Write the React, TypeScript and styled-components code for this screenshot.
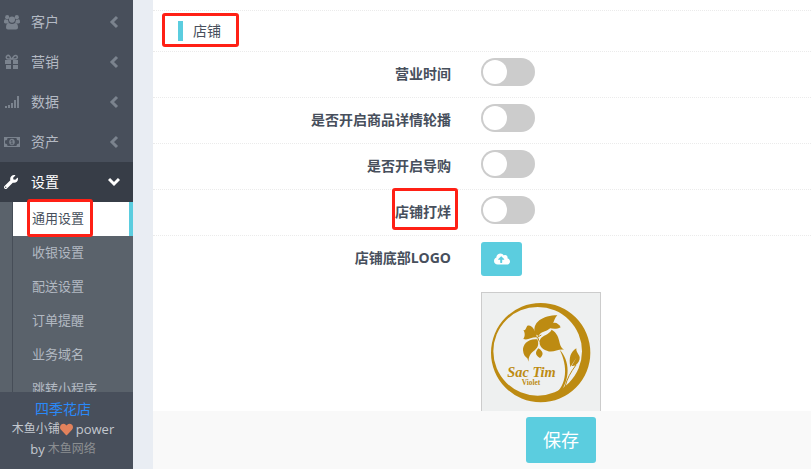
import React, { useState } from 'react';
import styled, { createGlobalStyle } from 'styled-components';
import { FaWrench, FaHeart, FaCloudUploadAlt } from 'react-icons/fa';

const teal = '#5bcddf';

const GlobalStyle = createGlobalStyle`
  * { box-sizing: border-box; }
  body {
    margin: 0;
    background: #e9edf3;
    font-family: "Open Sans", "Noto Sans CJK SC", sans-serif;
    font-size: 14px;
    color: #474f5c;
  }
  button, input { font-family: inherit; }
  ul { margin: 0; padding: 0; list-style: none; }
`;

const Page = styled.div`
  display: flex;
  gap: 20px;
  height: 100vh;
  overflow: hidden;
`;

const Sidebar = styled.aside`
  display: flex;
  flex-direction: column;
  flex: 0 0 133px;
  background: #484f5b;
`;

const Menu = styled.nav`
  flex: 1;
  min-height: 0;
  padding-top: 2px;
  overflow: hidden;
`;

const MenuButton = styled.button<{ $open?: boolean }>`
  display: grid;
  grid-template-columns: 16px 1fr 12px;
  column-gap: 11px;
  align-items: center;
  width: 100%;
  height: 40px;
  padding: 0 13px 0 4px;
  border: 0;
  background: ${(p) => (p.$open ? '#373d47' : 'transparent')};
  color: ${(p) => (p.$open ? '#fff' : '#b4bac4')};
  font-size: 14px;
  line-height: 20px;
  text-align: left;
  cursor: pointer;

  svg {
    display: block;
    color: ${(p) => (p.$open ? '#fff' : '#7b838e')};
  }
`;

const SubMenu = styled.ul`
  padding-left: 12px;
  background: #5a626b;
`;

const SubItem = styled.li`
  border-left: 1px solid #464d57;
`;

const SubLink = styled.a<{ $active?: boolean }>`
  display: block;
  height: 34px;
  padding-left: 19px;
  border-right: 4px solid ${(p) => (p.$active ? teal : 'transparent')};
  background: ${(p) => (p.$active ? '#fff' : 'transparent')};
  color: ${(p) => (p.$active ? '#474f5c' : '#b2b9c2')};
  font-size: 13px;
  line-height: 32px;
  text-decoration: none;
  white-space: nowrap;
`;

const Marked = styled.span`
  position: relative;
  display: inline-block;
`;

const Marker = styled.span<{ $top: number; $bottom: number; $left: number; $right: number }>`
  position: absolute;
  top: ${(p) => -p.$top}px;
  bottom: ${(p) => -p.$bottom}px;
  left: ${(p) => -p.$left}px;
  right: ${(p) => -p.$right}px;
  z-index: 1;
  border: 3px solid #ff2015;
  border-radius: 3px;
  pointer-events: none;
`;

const SideFooter = styled.footer`
  padding: 7px 7px 10px 0;
  color: #c3c8cf;
  font-size: 12px;
  line-height: 20px;
  text-align: center;
`;

const FooterLine = styled.div`
  display: flex;
  align-items: center;
  justify-content: center;
  gap: 3px;
  height: 20px;
  white-space: nowrap;
`;

const ShopLink = styled.a`
  color: #2a89f8;
  font-size: 14px;
  text-decoration: none;
`;

const Heart = styled(FaHeart)`
  margin-left: -3px;
  color: #e2825c;
`;

const VendorLink = styled.a`
  color: #8b8e91;
  text-decoration: none;
`;

const Latin = styled.span`
  font-size: 13px;
`;

const Panel = styled.main`
  display: flex;
  flex: 1;
  flex-direction: column;
  min-width: 0;
  background: #fff;
`;

const Form = styled.form`
  flex: 1;
  min-height: 0;
  padding-top: 10px;
  overflow: hidden;
`;

const SectionTitle = styled.h2`
  display: flex;
  align-items: center;
  height: 42px;
  margin: 0;
  padding-left: 25px;
  border-top: 1px dotted #ebebeb;
  border-bottom: 1px dotted #ebebeb;
  font-size: 14px;
  font-weight: 400;
  line-height: 20px;
`;

const TitleText = styled.span`
  display: block;
  padding-left: 10px;
  border-left: 5px solid ${teal};
`;

const Row = styled.div<{ $last?: boolean }>`
  display: grid;
  grid-template-columns: calc(50% - 31px) 1fr;
  column-gap: 30px;
  align-items: start;
  padding: 6px 0 ${(p) => (p.$last ? 0 : 11)}px;
  border-bottom: ${(p) => (p.$last ? '0' : '1px dotted #ebebeb')};
`;

const Label = styled.label`
  padding-top: 6px;
  font-weight: 700;
  line-height: 20px;
  text-align: right;
`;

const Switch = styled.input`
  appearance: none;
  display: block;
  width: 54px;
  height: 28px;
  margin: 0;
  padding: 2px;
  border-radius: 14px;
  background: #ccc;
  cursor: pointer;

  &::before {
    content: '';
    display: block;
    width: 24px;
    height: 24px;
    border-radius: 50%;
    background: #fff;
  }
  &:checked { background: ${teal}; }
  &:checked::before { margin-left: 26px; }
`;

const UploadButton = styled.button`
  display: flex;
  align-items: center;
  justify-content: center;
  width: 41px;
  height: 34px;
  border: 0;
  border-radius: 3px;
  background: ${teal};
  color: #fff;
  cursor: pointer;
`;

const Preview = styled.div`
  width: 120px;
  height: 120px;
  margin-top: 16px;
  border: 1px solid #ccc;
  background: #eef0f0;

  svg { display: block; }
`;

const ActionBar = styled.div`
  padding: 6px 0 6px calc(50% + 44px);
  background: #f9f9f9;
`;

const SaveButton = styled.button`
  display: block;
  width: 70px;
  height: 46px;
  padding: 0;
  border: 0;
  border-radius: 3px;
  background: ${teal};
  color: #fff;
  font-size: 18px;
  line-height: 46px;
  cursor: pointer;
`;

const UsersIcon = () => (
  <svg width="16" height="16" viewBox="0 0 16 16" fill="currentColor" aria-hidden="true">
    <circle cx="3.2" cy="3.2" r="2.1" />
    <circle cx="12.8" cy="3.2" r="2.1" />
    <circle cx="8" cy="5.600" r="3.100" />
    <path d="M1.300 5.300C.4 5.300 0 6.500 0 8c0 1 .5 1.400 1.400 1.400h2.200c.5-.5 1-.8 1.600-.9A4 4 0 0 1 4 5.500C3 6 2 5.700 1.300 5.300zM14.700 5.300c.9 0 1.300 1.200 1.300 2.700 0 1-.5 1.400-1.400 1.400h-2.200c-.5-.5-1-.8-1.600-.9A4 4 0 0 0 12 5.500c1 .5 2 .2 2.700-.2z" />
    <path d="M5 9c2 1.300 4 1.300 6 0 2.200 0 3 2 3 4.500 0 1.300-.8 2-2 2H4c-1.200 0-2-.7-2-2C2 11 2.800 9 5 9z" />
  </svg>
);

const GiftIcon = () => (
  <svg width="16" height="16" viewBox="0 0 16 16" fill="currentColor" aria-hidden="true">
    <path d="M1 6h6v4H1zM9 6h5v4H9zM2 11h5v4H2zM9 11h5v4H9z" />
    <path
      d="M7 5C6 2 5 1 3.500 1.500C1.500 2.500 2 5 4 5H11C14 5 14 2 12 1.500C10 1 9 3 8 5"
      fill="none"
      stroke="currentColor"
      strokeWidth="1.500"
    />
  </svg>
);

const SignalIcon = () => (
  <svg width="16" height="16" viewBox="0 0 16 16" fill="currentColor" aria-hidden="true">
    <path d="M1 12h2v2H1zM4 11h2v3H4zM7 9h2v5H7zM10 6h2v8h-2zM13 2h2v12h-2z" />
  </svg>
);

const MoneyIcon = () => (
  <svg width="16" height="16" viewBox="0 0 16 16" fill="currentColor" aria-hidden="true">
    <path
      fillRule="evenodd"
      d="M0 3h16v10H0zM3.500 4A2.500 2.500 0 0 1 1 6.500v3A2.500 2.500 0 0 1 3.500 12h9A2.500 2.500 0 0 1 15 9.500v-3A2.500 2.500 0 0 1 12.500 4z"
    />
    <path
      fillRule="evenodd"
      d="M8 4.700c1.800 0 2.800 1.400 2.800 3.300S9.800 11.300 8 11.300 5.200 9.900 5.200 8 6.200 4.700 8 4.700zM7.600 6L6.500 7v.8l1-.5v2.100h-.8v.8h2.500v-.8h-.8V6z"
    />
  </svg>
);

const Chevron = ({ down }: { down?: boolean }) => (
  <svg width="12" height="14" viewBox="0 0 12 14" fill="none" stroke="currentColor" strokeWidth="3" aria-hidden="true">
    <path d={down ? 'M1 4l5 5 5-5' : 'M9 2L4 7l5 5'} />
  </svg>
);

const FlowerLogo = () => (
  <svg width="118" height="118" viewBox="21 24 354 354" fill="#bd8b12" role="img" aria-label="Sac Tim Violet">
    <path
      fillRule="evenodd"
      d="M48 203a149 149 0 1 0 298 0a149 149 0 1 0-298 0zM55 199a133 133 0 1 1 266 0a133 133 0 1 1-266 0z"
    />
    <path d="M181 148C168 113 204 91 247 91C233 105 238 124 218 135C206 142 197 140 191 153z" />
    <path d="M222 129C231 108 247 109 257 127C245 133 235 132 222 129z" />
    <path d="M157 122C170 117 181 135 186 157C170 155 160 167 145 162C151 154 150 142 145 136C153 136 153 128 157 122z" />
    <path d="M187 163C158 160 143 179 144 196C145 209 151 216 157 220L161 230C160 215 166 205 180 195C190 187 192 176 187 163z" />
    <path d="M190 190C180 202 180 211 195 219C204 212 208 201 190 190z" />
    <path d="M196 162C203 151 222 149 230 134C246 143 251 158 254 174C256 184 261 191 268 194C248 191 233 205 216 197C199 192 189 179 196 162z" />
    <path d="M185 158l14-8M188 157l5 13" fill="none" stroke="#bd8b12" strokeWidth="3" />
    <path d="M254 194C284 226 289 282 251 329L236 331C277 299 279 244 254 194z" />
    <path d="M270 306C276 280 287 262 303 240" fill="none" stroke="#bd8b12" strokeWidth="3" />
    <path d="M286 246C281 219 286 201 304 190C302 207 322 211 311 230C306 239 298 244 290 243L304 218z" />
    <text x="97" y="275" fontFamily="Liberation Serif, serif" fontSize="43" fontWeight="700" fontStyle="italic">
      Sac Tim
    </text>
    <text x="140" y="299" fontFamily="Liberation Serif, serif" fontSize="22" fontWeight="700">
      Violet
    </text>
  </svg>
);

const sections = [
  { name: '客户', icon: <UsersIcon /> },
  { name: '营销', icon: <GiftIcon /> },
  { name: '数据', icon: <SignalIcon /> },
  { name: '资产', icon: <MoneyIcon /> },
];

const pages = ['收银设置', '配送设置', '订单提醒', '业务域名', '跳转小程序'];

const options = [
  { id: 'hours', name: '营业时间' },
  { id: 'carousel', name: '是否开启商品详情轮播' },
  { id: 'guide', name: '是否开启导购' },
  { id: 'closed', name: '店铺打烊', marked: true },
];

export default function App() {
  const [enabled, setEnabled] = useState<Record<string, boolean>>({});

  return (
    <>
      <GlobalStyle />
      <Page>
        <Sidebar>
          <Menu>
            {sections.map((s) => (
              <MenuButton key={s.name} type="button">
                {s.icon}
                <span>{s.name}</span>
                <Chevron />
              </MenuButton>
            ))}
            <MenuButton type="button" $open aria-expanded="true">
              <FaWrench size={14} />
              <span>设置</span>
              <Chevron down />
            </MenuButton>
            <SubMenu>
              <SubItem>
                <SubLink href="#general" $active aria-current="page">
                  <Marked>
                    通用设置
                    <Marker $top={3} $bottom={3} $left={5} $right={9} />
                  </Marked>
                </SubLink>
              </SubItem>
              {pages.map((p) => (
                <SubItem key={p}>
                  <SubLink href={`#${p}`}>{p}</SubLink>
                </SubItem>
              ))}
            </SubMenu>
          </Menu>
          <SideFooter>
            <FooterLine>
              <ShopLink href="#shop">四季花店</ShopLink>
            </FooterLine>
            <FooterLine>
              <span>木鱼小铺</span>
              <Heart size={13} />
              <Latin>power</Latin>
            </FooterLine>
            <FooterLine>
              <Latin>by</Latin>
              <VendorLink href="#vendor">木鱼网络</VendorLink>
            </FooterLine>
          </SideFooter>
        </Sidebar>
        <Panel>
          <Form id="settings" onSubmit={(e) => e.preventDefault()}>
            <SectionTitle>
              <Marked>
                <TitleText>店铺</TitleText>
                <Marker $top={8} $bottom={6} $left={16} $right={18} />
              </Marked>
            </SectionTitle>
            {options.map((o) => (
              <Row key={o.id}>
                <Label htmlFor={o.id}>
                  <Marked>
                    {o.name}
                    {o.marked && <Marker $top={14} $bottom={8} $left={3} $right={7} />}
                  </Marked>
                </Label>
                <Switch
                  id={o.id}
                  type="checkbox"
                  checked={!!enabled[o.id]}
                  onChange={(e) => setEnabled({ ...enabled, [o.id]: e.target.checked })}
                />
              </Row>
            ))}
            <Row $last>
              <Label htmlFor="logo">店铺底部LOGO</Label>
              <div>
                <UploadButton id="logo" type="button">
                  <FaCloudUploadAlt size={16} />
                </UploadButton>
                <Preview>
                  <FlowerLogo />
                </Preview>
              </div>
            </Row>
          </Form>
          <ActionBar>
            <SaveButton type="submit" form="settings">
              保存
            </SaveButton>
          </ActionBar>
        </Panel>
      </Page>
    </>
  );
}
